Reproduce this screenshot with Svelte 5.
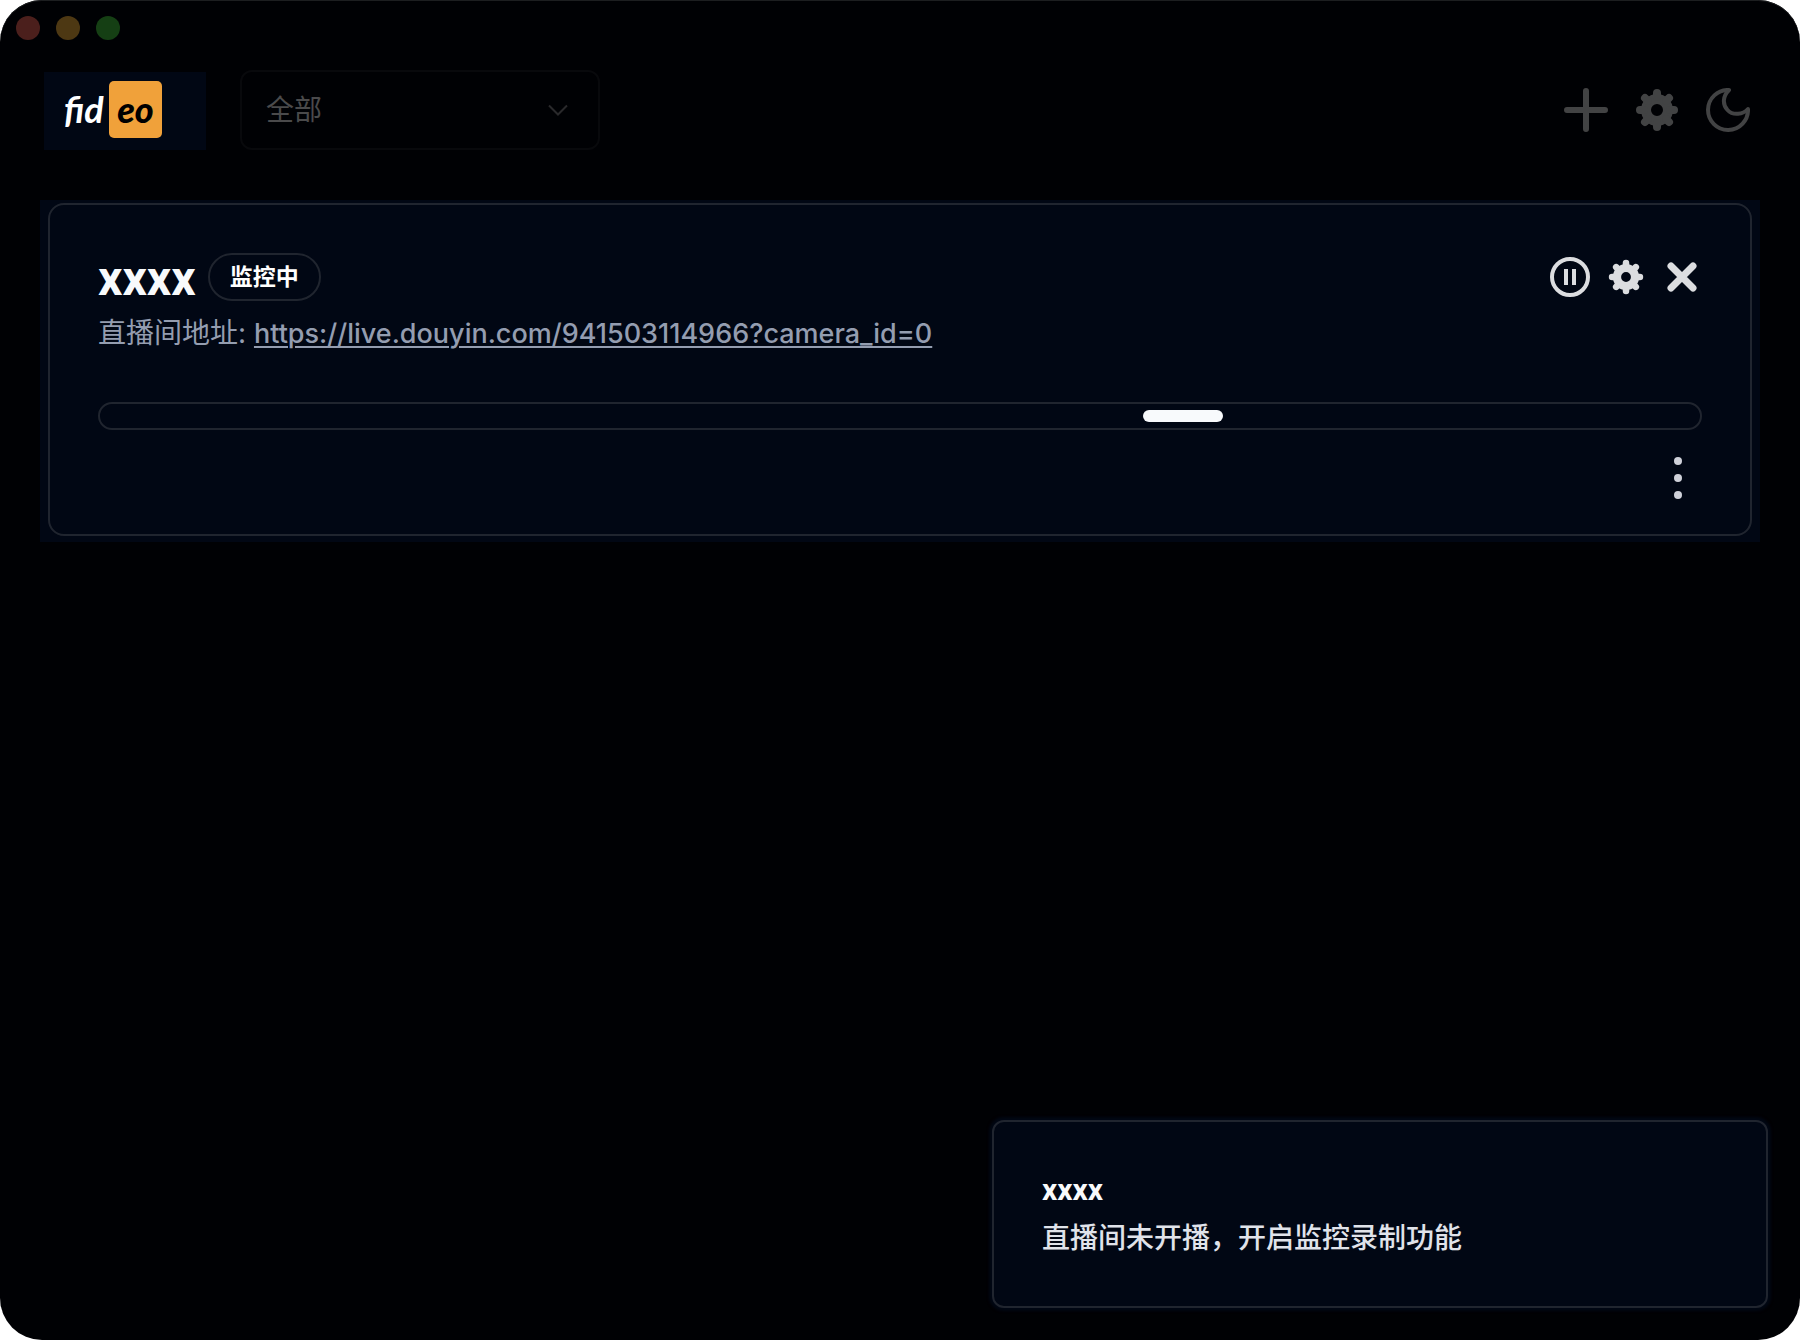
<script>
  const platforms = [{ value: 'all', label: '全部' }];
  let platform = 'all';

  const stream = {
    title: 'xxxx',
    status: '监控中',
    url: 'https://live.douyin.com/941503114966?camera_id=0',
    progress: 65.2
  };

  const toast = {
    title: 'xxxx',
    message: '直播间未开播，开启监控录制功能'
  };

  const teeth = [0, 45, 90, 135, 180, 225, 270, 315];
</script>

<svelte:head>
  <title>fideo</title>
</svelte:head>

{#snippet gear()}
  <svg class="gear" viewBox="0 0 44 44" fill="none" stroke="currentColor" aria-hidden="true">
    <circle cx="22" cy="22" r="11" stroke-width="10" />
    {#each teeth as deg}
      <path d="M22 9V5" stroke-width="8" stroke-linecap="round" transform="rotate({deg} 22 22)" />
    {/each}
  </svg>
{/snippet}

<div class="window">
  <div class="traffic">
    <button class="dot red" aria-label="关闭"></button>
    <button class="dot yellow" aria-label="最小化"></button>
    <button class="dot green" aria-label="全屏"></button>
  </div>

  <header class="topbar">
    <div class="logo">
      <span class="logo-fid">fid</span><span class="logo-eo">eo</span>
    </div>

    <div class="select-wrap">
      <select aria-label="平台" bind:value={platform}>
        {#each platforms as p}
          <option value={p.value}>{p.label}</option>
        {/each}
      </select>
      <svg class="chevron" viewBox="0 0 20 12" fill="none" stroke="currentColor" stroke-width="2" aria-hidden="true">
        <path d="M1 1.5l9 9 9-9" />
      </svg>
    </div>

    <nav class="tools">
      <button class="icon-btn" aria-label="添加">
        <svg viewBox="0 0 44 44" fill="none" stroke="currentColor" stroke-width="6" stroke-linecap="round">
          <path d="M22 3v38M3 22h38" />
        </svg>
      </button>
      <button class="icon-btn" aria-label="设置">{@render gear()}</button>
      <button class="icon-btn" aria-label="主题">
        <svg viewBox="0 0 44 44" fill="none" stroke="currentColor" stroke-width="4" stroke-linejoin="round">
          <path d="M23 2A20 20 0 1 0 42 21C37 26.500 27 28 21.500 22C16 16 17 8 23 2Z" />
        </svg>
      </button>
    </nav>
  </header>

  <main class="highlight">
    <article class="card">
      <div class="card-head">
        <div class="card-title">
          <h2>{stream.title}</h2>
          <span class="badge">{stream.status}</span>
        </div>
        <div class="actions">
          <button class="icon-btn" aria-label="暂停">
            <svg viewBox="0 0 40 40" fill="none" stroke="currentColor">
              <circle cx="20" cy="20" r="18" stroke-width="4" />
              <path d="M16 12v16M24 12v16" stroke-width="4" />
            </svg>
          </button>
          <button class="icon-btn small" aria-label="编辑">{@render gear()}</button>
          <button class="icon-btn" aria-label="删除">
            <svg viewBox="0 0 40 40" fill="none" stroke="currentColor" stroke-width="7" stroke-linecap="round">
              <path d="M9 9l22 22M31 9L9 31" />
            </svg>
          </button>
        </div>
      </div>

      <p class="address">直播间地址: <a href={stream.url}>{stream.url}</a></p>

      <div class="progress" role="progressbar" aria-label="录制进度">
        <div class="progress-bar" style="margin-left: {stream.progress}%"></div>
      </div>

      <div class="card-foot">
        <button class="icon-btn" aria-label="更多">
          <svg viewBox="0 0 48 48" fill="currentColor">
            <circle cx="24" cy="7" r="4" />
            <circle cx="24" cy="24" r="4" />
            <circle cx="24" cy="41" r="4" />
          </svg>
        </button>
      </div>
    </article>
  </main>

  <div class="toast" role="status">
    <strong>{toast.title}</strong>
    <p>{toast.message}</p>
  </div>
</div>

<style>
  :global(body) {
    background: #fff;
  }

  .window {
    --bg: #000104;
    --surface: #010714;
    --border: #20252f;

    position: relative;
    box-sizing: border-box;
    min-height: 100vh;
    padding: 16px 40px;
    border-radius: 42px;
    background: var(--bg);
    box-shadow: inset 0 1px #1c1e20;
    color: #f8fafc;
    font-family: Inter, "Noto Sans CJK SC", sans-serif;
    font-size: 28px;
    line-height: 40px;
  }

  button {
    padding: 0;
    border: 0;
    background: none;
    color: inherit;
    cursor: pointer;
  }

  svg { display: block; width: 100%; height: 100%; }

  .traffic {
    display: flex;
    gap: 16px;
    margin-left: -24px;
  }

  .dot {
    width: 24px;
    height: 24px;
    border-radius: 50%;
  }

  .red { background: #4b1f1c; }
  .yellow { background: #4d3813; }
  .green { background: #153f14; }

  /* Top bar */
  .topbar {
    display: flex;
    align-items: center;
    margin: 30px 10px 0 4px;
  }

  .logo {
    display: flex;
    align-items: center;
    box-sizing: border-box;
    width: 162px;
    height: 78px;
    margin-top: 2px;
    padding: 0 0 4px 20px;
    background: var(--surface);
    font-family: Lato, sans-serif;
    font-size: 36px;
    font-style: italic;
    font-weight: 700;
  }

  .logo-fid {
    width: 45px;
    color: #fff;
  }

  .logo-eo {
    width: 53px;
    border-radius: 5px;
    background: #f0a13a;
    color: #000;
    font-weight: 900;
    line-height: 57px;
    text-align: center;
  }

  .select-wrap {
    position: relative;
    width: 360px;
    margin-left: 34px;
    color: #4a4a4b;
  }

  select {
    display: block;
    appearance: none;
    width: 100%;
    height: 80px;
    padding: 0 24px;
    border: 2px solid #08090c;
    border-radius: 12px;
    background: transparent;
    color: inherit;
    font: inherit;
  }

  .chevron {
    position: absolute;
    top: 34px;
    right: 32px;
    width: 20px;
    height: 12px;
    color: #29292b;
    pointer-events: none;
  }

  .tools {
    display: flex;
    gap: 27px;
    margin-left: auto;
    color: #424344;
  }

  .tools .icon-btn {
    width: 44px;
    height: 44px;
  }

  /* Stream card */
  .highlight {
    margin-top: 50px;
    padding: 3px 8px 6px;
    background: var(--surface);
  }

  .card {
    padding: 48px;
    padding-bottom: 32px;
    border: 2px solid var(--border);
    border-radius: 16px;
  }

  .card-head {
    display: flex;
    justify-content: space-between;
    align-items: flex-start;
  }

  .card-title {
    display: flex;
    align-items: flex-start;
    gap: 12px;
  }

  h2 {
    margin: 0;
    font-family: Roboto, sans-serif;
    font-size: 48px;
    font-weight: 700;
    line-height: 52px;
  }

  .badge {
    padding: 0 20px;
    border: 2px solid var(--border);
    border-radius: 24px;
    color: #fff;
    font-size: 23px;
    font-weight: 700;
    line-height: 44px;
  }

  .actions {
    display: flex;
    gap: 16px;
    padding-top: 4px;
    color: #dcdde0;
  }

  .actions .icon-btn {
    width: 40px;
    height: 40px;
  }

  .actions .small {
    box-sizing: border-box;
    padding: 2px;
  }

  .address {
    margin: 8px 0 0;
    color: #949db0;
  }

  .address a {
    color: inherit;
    font-size: 27px;
    font-weight: 500;
    text-decoration-thickness: 2px;
    text-underline-offset: 3px;
  }

  .progress {
    margin-top: 48px;
    padding: 6px 0;
    border: 2px solid var(--border);
    border-radius: 14px;
  }

  .progress-bar {
    width: 80px;
    height: 12px;
    border-radius: 6px;
    background: #f8fafc;
  }

  .card-foot {
    display: flex;
    justify-content: flex-end;
    margin-top: 24px;
    color: #cfd1d9;
  }

  .card-foot .icon-btn {
    width: 48px;
    height: 48px;
  }

  /* Toast */
  .toast {
    position: absolute;
    right: 32px;
    bottom: 32px;
    box-sizing: border-box;
    width: 776px;
    max-width: calc(100% - 64px);
    padding: 48px;
    border: 2px solid var(--border);
    border-radius: 12px;
    background: var(--surface);
    box-shadow: 0 0 3px 3px var(--surface);
  }

  .toast strong {
    display: block;
    font-family: Roboto, sans-serif;
    font-size: 30px;
  }

  .toast p {
    margin: 8px 0 0;
    color: #e0e3ea;
    font-weight: 500;
  }
</style>
